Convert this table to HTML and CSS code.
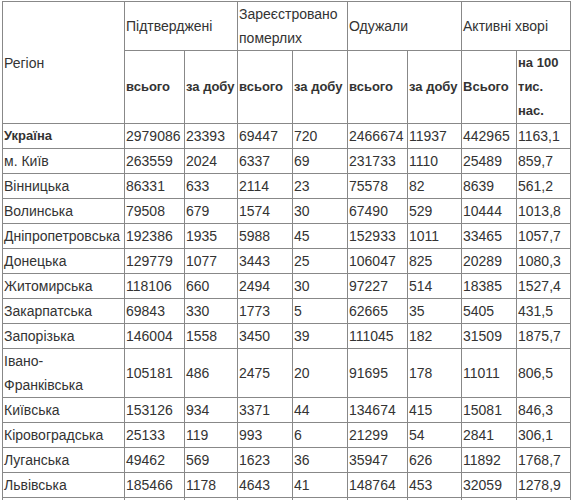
FILE: index.html
```html
<!DOCTYPE html>
<html lang="uk">
<head>
<meta charset="utf-8">
<link rel="stylesheet" href="styles.css">
</head>
<body>
<table class="stats">
  <colgroup>
    <col class="c-region">
    <col class="c60">
    <col class="c53">
    <col class="c55">
    <col class="c55">
    <col class="c60">
    <col class="c54">
    <col class="c55">
    <col class="c54">
  </colgroup>
  <thead>
    <tr class="h1">
      <th rowspan="2">Регіон</th>
      <th colspan="2">Підтверджені</th>
      <th colspan="2">Зареєстровано померлих</th>
      <th colspan="2">Одужали</th>
      <th colspan="2">Активні хворі</th>
    </tr>
    <tr class="h2">
      <th class="strong">всього</th>
      <th class="strong">за добу</th>
      <th class="strong">всього</th>
      <th class="strong">за добу</th>
      <th class="strong">всього</th>
      <th class="strong">за добу</th>
      <th class="strong">Всього</th>
      <th class="strong">на 100 тис. нас.</th>
    </tr>
  </thead>
  <tbody>
    <tr><td class="strong">Україна</td><td>2979086</td><td>23393</td><td>69447</td><td>720</td><td>2466674</td><td>11937</td><td>442965</td><td>1163,1</td></tr>
    <tr><td>м. Київ</td><td>263559</td><td>2024</td><td>6337</td><td>69</td><td>231733</td><td>1110</td><td>25489</td><td>859,7</td></tr>
    <tr><td>Вінницька</td><td>86331</td><td>633</td><td>2114</td><td>23</td><td>75578</td><td>82</td><td>8639</td><td>561,2</td></tr>
    <tr><td>Волинська</td><td>79508</td><td>679</td><td>1574</td><td>30</td><td>67490</td><td>529</td><td>10444</td><td>1013,8</td></tr>
    <tr><td>Дніпропетровська</td><td>192386</td><td>1935</td><td>5988</td><td>45</td><td>152933</td><td>1011</td><td>33465</td><td>1057,7</td></tr>
    <tr><td>Донецька</td><td>129779</td><td>1077</td><td>3443</td><td>25</td><td>106047</td><td>825</td><td>20289</td><td>1080,3</td></tr>
    <tr><td>Житомирська</td><td>118106</td><td>660</td><td>2494</td><td>30</td><td>97227</td><td>514</td><td>18385</td><td>1527,4</td></tr>
    <tr><td>Закарпатська</td><td>69843</td><td>330</td><td>1773</td><td>5</td><td>62665</td><td>35</td><td>5405</td><td>431,5</td></tr>
    <tr><td>Запорізька</td><td>146004</td><td>1558</td><td>3450</td><td>39</td><td>111045</td><td>182</td><td>31509</td><td>1875,7</td></tr>
    <tr><td>Івано-<br>Франківська</td><td>105181</td><td>486</td><td>2475</td><td>20</td><td>91695</td><td>178</td><td>11011</td><td>806,5</td></tr>
    <tr><td>Київська</td><td>153126</td><td>934</td><td>3371</td><td>44</td><td>134674</td><td>415</td><td>15081</td><td>846,3</td></tr>
    <tr><td>Кіровоградська</td><td>25133</td><td>119</td><td>993</td><td>6</td><td>21299</td><td>54</td><td>2841</td><td>306,1</td></tr>
    <tr><td>Луганська</td><td>49462</td><td>569</td><td>1623</td><td>36</td><td>35947</td><td>626</td><td>11892</td><td>1768,7</td></tr>
    <tr><td>Львівська</td><td>185466</td><td>1178</td><td>4643</td><td>41</td><td>148764</td><td>453</td><td>32059</td><td>1278,9</td></tr>
    <tr><td>Миколаївська</td><td>80163</td><td>520</td><td>1720</td><td>18</td><td>67925</td><td>271</td><td>10518</td><td>939,6</td></tr>
  </tbody>
</table>
</body>
</html>
```

FILE: styles.css
```css
html, body {
  margin: 0;
  padding: 0;
  background: #fff;
}

body {
  font-family: "Liberation Sans", Arial, sans-serif;
  font-size: 14px;
  color: #333;
}

.stats {
  border-collapse: collapse;
  table-layout: fixed;
  width: 568px;
  margin: 1px 0 0 2px;
}

.c-region { width: 122px; }
.c60 { width: 60px; }
.c53 { width: 53px; }
.c55 { width: 55px; }
.c54 { width: 54px; }

.stats th,
.stats td {
  border: 1px solid #888;
  padding: 0 1px;
  line-height: 24px;
  text-align: left;
  vertical-align: middle;
  font-weight: normal;
}

.stats .strong {
  font-weight: bold;
  font-size: 13px;
}
```
